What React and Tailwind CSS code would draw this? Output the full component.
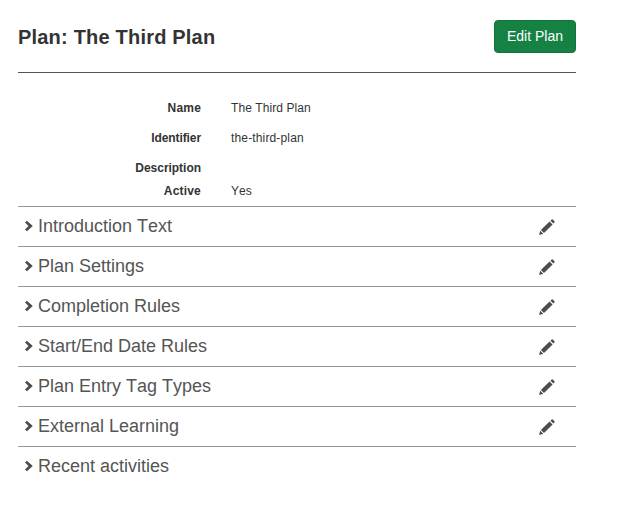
const sections = [
  { title: 'Introduction Text', editable: true },
  { title: 'Plan Settings', editable: true },
  { title: 'Completion Rules', editable: true },
  { title: 'Start/End Date Rules', editable: true },
  { title: 'Plan Entry Tag Types', editable: true },
  { title: 'External Learning', editable: true },
  { title: 'Recent activities', editable: false },
];

const details = [
  { label: 'Name', value: 'The Third Plan', height: 'h-[30px]', labelSpacing: 'tracking-[0.2px]', valueSpacing: 'tracking-[0.07px]' },
  { label: 'Identifier', value: 'the-third-plan', height: 'h-[30px]', labelSpacing: 'tracking-[-0.1px]', valueSpacing: 'tracking-[0.15px]' },
  { label: 'Description', value: '', height: 'h-[23px]', labelSpacing: 'tracking-[-0.03px]', valueSpacing: 'tracking-normal' },
  { label: 'Active', value: 'Yes', height: 'h-[25px]', labelSpacing: 'tracking-[0.2px]', valueSpacing: 'tracking-[0.07px]' },
];

function Chevron() {
  return (
    <svg className="ml-[6px] mt-[13px] h-3 w-[10px] shrink-0" viewBox="0 0 10 12" fill="#504c4c">
      <path d="M1 2.6 2.9.7 8.8 6 2.9 11.3 1 9.4 4.5 6Z" />
    </svg>
  );
}

function Pencil() {
  return (
    <svg className="mr-[21px] mt-[12px] h-4 w-4 shrink-0" viewBox="0 0 16 16" fill="#504c4c">
      <path d="M0 16 1.2 11.8 4.2 14.8ZM1.9 11 10.5 2.4 13.6 5.5 5 14.1ZM11.4 1.7 12.7.5Q13.3 0 13.8.5L15.5 2.2Q16 2.7 15.5 3.3L14.3 4.6Z" />
    </svg>
  );
}

export default function App() {
  return (
    <main className="h-[512px] w-[617px] overflow-hidden bg-white pl-[18px] pt-5 font-['Liberation_Sans',Arial,sans-serif] text-[#333] [font-kerning:none]">
      <div className="w-[558px]">
        <header className="flex h-[53px] items-start justify-between border-b border-[#555]">
          <h1 className="mt-[5px] text-[20px] font-bold leading-6 tracking-[0.2px]">Plan: The Third Plan</h1>
          <button className="h-[33px] w-[82px] rounded-[4px] border border-[#12733a] bg-[#158244] text-[14px] text-white">Edit Plan</button>
        </header>
        <dl className="pt-[25px] text-[12px] leading-5">
          {details.map((d) => (
            <div key={d.label} className={`flex ${d.height}`}>
              <dt className={`w-[183px] text-right font-bold ${d.labelSpacing}`}>{d.label}</dt>
              <dd className={`ml-[30px] ${d.valueSpacing}`}>{d.value}</dd>
            </div>
          ))}
        </dl>
        {sections.map((s) => (
          <section key={s.title} className="flex h-10 items-start border-t border-[#959595]">
            <Chevron />
            <h2 className="ml-1 mt-[7px] flex-1 text-[18px] leading-6 text-[#555]">{s.title}</h2>
            {s.editable && <Pencil />}
          </section>
        ))}
      </div>
    </main>
  );
}
